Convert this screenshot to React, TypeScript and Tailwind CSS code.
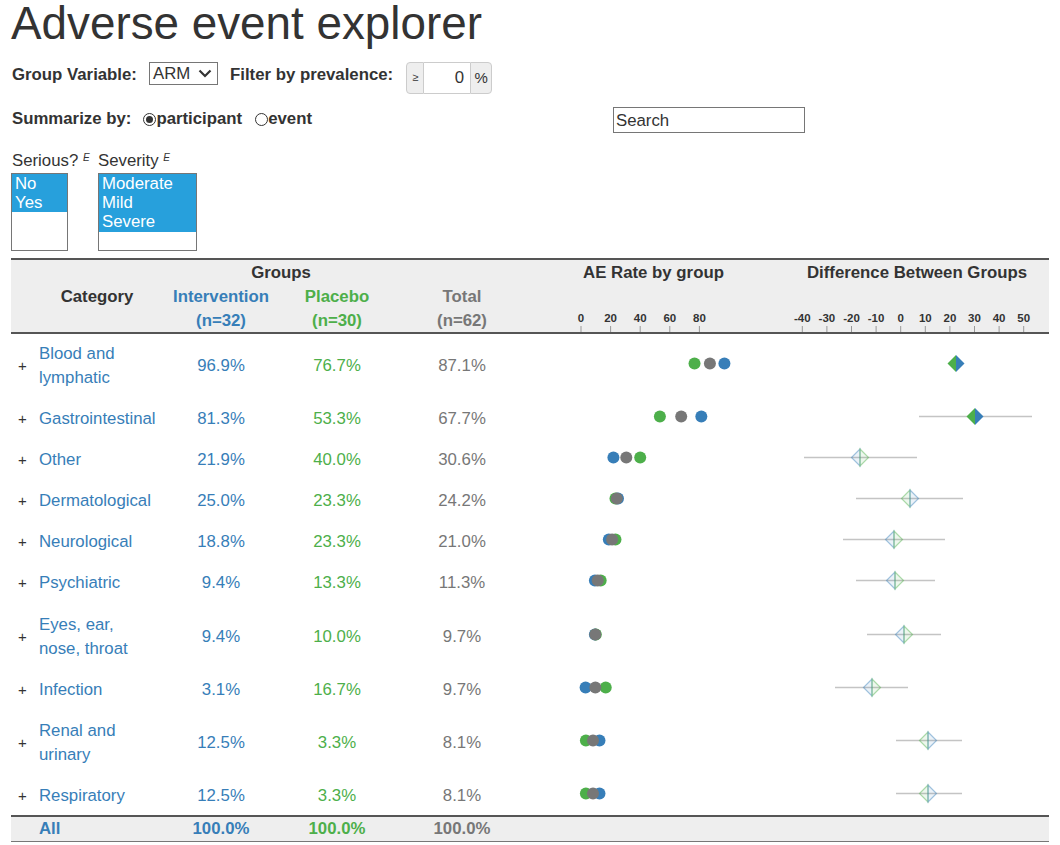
import React from 'react';

const BLUE = '#377eb8';
const GREEN = '#4daf4a';
const GRAY = '#777777';

const COLS = 'grid grid-cols-[154px_112px_120px_130px_253px_269px]';

type Row = {
  name: string[];
  i: number;
  p: number;
  t: number;
  d: number;
  lo?: number;
  hi?: number;
  sig?: boolean;
};

const rows: Row[] = [
  { name: ['Blood and', 'lymphatic'], i: 96.9, p: 76.7, t: 87.1, d: 956, sig: true },
  { name: ['Gastrointestinal'], i: 81.3, p: 53.3, t: 67.7, d: 975, lo: 919, hi: 1032, sig: true },
  { name: ['Other'], i: 21.9, p: 40.0, t: 30.6, d: 860, lo: 804, hi: 917 },
  { name: ['Dermatological'], i: 25.0, p: 23.3, t: 24.2, d: 910, lo: 856, hi: 963 },
  { name: ['Neurological'], i: 18.8, p: 23.3, t: 21.0, d: 894, lo: 843, hi: 945 },
  { name: ['Psychiatric'], i: 9.4, p: 13.3, t: 11.3, d: 895, lo: 856, hi: 935 },
  { name: ['Eyes, ear,', 'nose, throat'], i: 9.4, p: 10.0, t: 9.7, d: 904, lo: 867, hi: 941 },
  { name: ['Infection'], i: 3.1, p: 16.7, t: 9.7, d: 872, lo: 835, hi: 908 },
  { name: ['Renal and', 'urinary'], i: 12.5, p: 3.3, t: 8.1, d: 928, lo: 896, hi: 962 },
  { name: ['Respiratory'], i: 12.5, p: 3.3, t: 8.1, d: 928, lo: 896, hi: 962 },
];

// x positions inside the chart cells
const rateX = (v: number) => 54 + v * 1.48;
const diffX = (v: number) => 120.7 + v * 2.46;

function Diamond({ x, y, pos, sig }: { x: number; y: number; pos: boolean; sig?: boolean }) {
  const s = 8.5;
  const left = pos ? GREEN : BLUE;
  const right = pos ? BLUE : GREEN;
  const l = `${x},${y - s} ${x},${y + s} ${x - s},${y}`;
  const r = `${x},${y - s} ${x + s},${y} ${x},${y + s}`;
  if (sig) {
    return (
      <g>
        <polygon points={l} fill={left} />
        <polygon points={r} fill={right} />
      </g>
    );
  }
  return (
    <g strokeWidth={1.2}>
      <polygon points={l} fill={left} fillOpacity={0.1} stroke={left} strokeOpacity={0.45} />
      <polygon points={r} fill={right} fillOpacity={0.1} stroke={right} strokeOpacity={0.45} />
    </g>
  );
}

function Listbox({ width, options, selected }: { width: string; options: string[]; selected: number }) {
  return (
    <div className={`${width} h-[78px] border border-[#767676] bg-white`}>
      {options.map((o, k) => (
        <div
          key={o}
          className={
            k < selected
              ? 'h-[19.2px] leading-[19px] pl-[3px] bg-[#27a0dc] text-white'
              : 'h-[19.2px] leading-[19px] pl-[3px]'
          }
        >
          {o}
        </div>
      ))}
    </div>
  );
}

function Radio({ checked }: { checked?: boolean }) {
  return (
    <span className="w-[13px] h-[13px] rounded-full border border-[#333] flex items-center justify-center">
      {checked && <span className="w-[7px] h-[7px] rounded-full bg-[#333]" />}
    </span>
  );
}

export default function App() {
  return (
    <div className="font-['Liberation_Sans',Arial,sans-serif] text-[#333] text-[16.8px] pl-[11px] w-[1060px] bg-white">
      <h1 className="text-[45.8px] leading-[48px] h-[48px]">Adverse event explorer</h1>

      <div className="mt-[14px] flex items-start gap-3 h-[32px]">
        <span className="font-bold leading-[25px] ml-[1px]">Group Variable:</span>
        <div className="w-[69px] h-[23px] border border-[#767676] flex items-center justify-between pl-[3px] pr-[5px]">
          <span className="leading-[21px]">ARM</span>
          <svg width="14" height="9" viewBox="0 0 14 9">
            <path d="M1.5 1.5 L7 7 L12.5 1.5" fill="none" stroke="#333" strokeWidth="2.2" />
          </svg>
        </div>
        <span className="font-bold leading-[25px]">Filter by prevalence:</span>
        <div className="flex h-[32px] ml-[1px]">
          <span className="w-[18px] bg-[#eeeeee] border border-[#cccccc] rounded-l-[4px] text-[11px] flex items-end justify-center pb-[8px]">≥</span>
          <span className="w-[46px] border-y border-[#cccccc] text-right pr-[6px] leading-[29px]">0</span>
          <span className="w-[22px] bg-[#eeeeee] border border-[#cccccc] rounded-r-[4px] text-[15px] flex items-center justify-center">%</span>
        </div>
      </div>

      <div className="flex items-start">
        <div className="w-[602px] mt-[13px] flex items-center">
          <span className="font-bold leading-[24px] ml-[1px]">Summarize by:</span>
          <div className="ml-[12px] flex items-center">
            <Radio checked />
            <span className="font-bold leading-[24px]">participant</span>
          </div>
          <div className="ml-[13px] flex items-center">
            <Radio />
            <span className="font-bold leading-[24px]">event</span>
          </div>
        </div>
        <div className="mt-[13px] w-[192px] h-[26px] border border-[#767676] pl-[2px] leading-[26px]">Search</div>
      </div>

      <div className="mt-[16px] flex">
        <div className="w-[87px]">
          <div className="leading-[24px] pl-[1px]">
            Serious? <sup className="italic text-[10px]">E</sup>
          </div>
          <Listbox width="w-[57px]" options={['No', 'Yes']} selected={2} />
        </div>
        <div>
          <div className="leading-[24px]">
            Severity <sup className="italic text-[10px]">E</sup>
          </div>
          <Listbox width="w-[99px]" options={['Moderate', 'Mild', 'Severe']} selected={3} />
        </div>
      </div>

      <div className="mt-[7px] w-[1038px]">
        <div className={`${COLS} grid-rows-[24px_24px_24px] bg-[#eeeeee] border-t-2 border-b-2 border-[#555] font-bold leading-[25px]`}>
          <div className="row-start-1 col-start-2 col-span-2 text-center">Groups</div>
          <div className="row-start-1 col-start-5 text-center">AE Rate by group</div>
          <div className="row-start-1 col-start-6 text-center pl-[5px]">Difference Between Groups</div>
          <div className="row-start-2 col-start-1 text-center pl-[18px]">Category</div>
          <div className="row-start-2 col-start-2 text-center text-[#377eb8]">Intervention</div>
          <div className="row-start-2 col-start-3 text-center text-[#4daf4a]">Placebo</div>
          <div className="row-start-2 col-start-4 text-center text-[#777]">Total</div>
          <div className="row-start-3 col-start-2 text-center text-[#377eb8]">(n=32)</div>
          <div className="row-start-3 col-start-3 text-center text-[#4daf4a]">(n=30)</div>
          <div className="row-start-3 col-start-4 text-center text-[#777]">(n=62)</div>
          <div className="row-start-3 col-start-5">
            <svg width="253" height="24" className="block">
              {[0, 20, 40, 60, 80].map((v) => (
                <g key={v}>
                  <text x={rateX(v)} y={14} textAnchor="middle" fontSize="11.5" fontWeight="bold" fill="#333">
                    {v}
                  </text>
                  <line x1={rateX(v)} x2={rateX(v)} y1={18} y2={24} stroke="#999" />
                </g>
              ))}
            </svg>
          </div>
          <div className="row-start-3 col-start-6">
            <svg width="269" height="24" className="block">
              {[-40, -30, -20, -10, 0, 10, 20, 30, 40, 50].map((v) => (
                <g key={v}>
                  <text x={diffX(v)} y={14} textAnchor="middle" fontSize="11.5" fontWeight="bold" fill="#333">
                    {v}
                  </text>
                  <line x1={diffX(v)} x2={diffX(v)} y1={18} y2={24} stroke="#999" />
                </g>
              ))}
            </svg>
          </div>
        </div>

        {rows.map((r) => {
          const y = 9.5;
          return (
            <div key={r.name.join(' ')} className={`${COLS} pt-[8px] pb-[9.1px] items-center leading-[24px]`}>
              <div className="flex items-center pl-[7px]">
                <span className="w-[21px] text-[15px]">+</span>
                <div className="text-[#377eb8]">
                  {r.name.map((n) => (
                    <div key={n}>{n}</div>
                  ))}
                </div>
              </div>
              <div className="text-center text-[#377eb8]">{r.i.toFixed(1)}%</div>
              <div className="text-center text-[#4daf4a]">{r.p.toFixed(1)}%</div>
              <div className="text-center text-[#777]">{r.t.toFixed(1)}%</div>
              <div className="flex items-center">
                <svg width="253" height="24" className="block overflow-visible">
                  <circle cx={rateX(r.i)} cy={y} r={6} fill={BLUE} />
                  <circle cx={rateX(r.p)} cy={y} r={6} fill={GREEN} />
                  <circle cx={rateX(r.t)} cy={y} r={6} fill={GRAY} />
                </svg>
              </div>
              <div className="flex items-center">
                <svg width="269" height="24" className="block overflow-visible">
                  {r.lo !== undefined && r.hi !== undefined && (
                    <line x1={r.lo - 780} x2={r.hi - 780} y1={y} y2={y} stroke="#c4c4c4" strokeWidth={1.5} />
                  )}
                  <Diamond x={r.d - 780} y={y} pos={r.i >= r.p} sig={r.sig} />
                </svg>
              </div>
            </div>
          );
        })}

        <div className={`${COLS} -mt-[2px] bg-[#eeeeee] border-t-2 border-b border-t-[#555] border-b-[#777] font-bold leading-[24px]`}>
          <div className="pl-[28px] text-[#377eb8]">All</div>
          <div className="text-center text-[#377eb8]">100.0%</div>
          <div className="text-center text-[#4daf4a]">100.0%</div>
          <div className="text-center text-[#777]">100.0%</div>
          <div />
          <div />
        </div>
      </div>
    </div>
  );
}
